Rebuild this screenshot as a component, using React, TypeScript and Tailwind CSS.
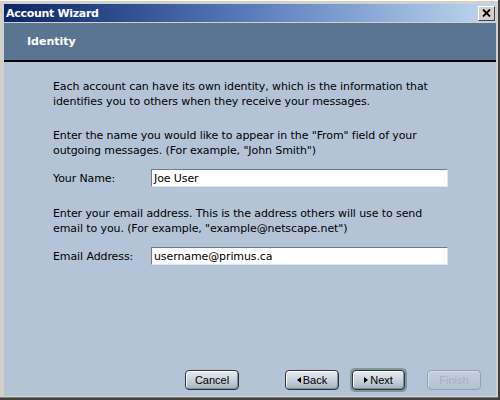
import React from "react";

const font = { fontFamily: '"DejaVu Sans", Verdana, sans-serif' };

function Btn({ children, disabled }: { children: React.ReactNode; disabled?: boolean }) {
  return (
    <div className="w-[54px]">
      <div
        className={
          "flex items-center justify-center h-[20px] rounded-[4px] border text-[11px] leading-none " +
          (disabled
            ? "border-[#8fa2b6] text-[#a3b3c4] bg-gradient-to-b from-[#c4d0dc] to-[#b4c2d0] shadow-[inset_1px_1px_0_#d6dee6]"
            : "border-[#303438] text-black bg-gradient-to-b from-[#e8edf2] via-[#c9d3dc] to-[#a4b2bf] shadow-[inset_1px_1px_0_#ffffff,inset_-1px_-1px_0_#7e8e9c]")
        }
        style={{ fontFamily: '"Liberation Sans", Arial, sans-serif' }}
      >
        {children}
      </div>
    </div>
  );
}

export default function App() {
  return (
    <div
      className="w-[500px] h-[400px] bg-[#d4d0c8] border-r-2 border-b-2 border-[#404040] flex flex-col"
      style={font}
    >
      <div className="flex flex-col flex-1 pt-[4px] pl-[4px] pr-[2px] pb-[1px] border-b border-[#808080] border-t border-t-white">
        {/* Title bar */}
        <div className="h-[18px] -mt-[1px] flex items-center justify-between bg-gradient-to-r from-[#0b2468] via-[#5a7cbc] to-[#c0d8ee] pl-[2px] pr-[1px]">
          <span className="text-white font-bold text-[11px] leading-none tracking-[-0.3px]">
            Account Wizard
          </span>
          <div className="w-[17px] h-[15px] bg-[#d4d0c8] border border-t-white border-l-white border-r-[#404040] border-b-[#404040] flex items-center justify-center">
            <svg width="9" height="8" viewBox="0 0 9 8">
              <path d="M1 0.5 L8 7.5 M8 0.5 L1 7.5" stroke="black" strokeWidth="1.8" />
            </svg>
          </div>
        </div>
        <div className="h-[1px] bg-[#d4d0c8]" />
        {/* Header */}
        <div className="h-[39px] bg-[#5a7592] border-b-2 border-black flex items-center pl-[23px]">
          <span className="text-white font-bold text-[11px] leading-none">Identity</span>
        </div>
        {/* Content */}
        <div className="flex-1 bg-[#b4c4d7] flex flex-col pl-[49px] pt-[17px] text-[11px] leading-[15px] tracking-[-0.1px] text-black">
          <p className="mb-[19px] w-[398px]">
            Each account can have its own identity, which is the information that identifies
            you to others when they receive your messages.
          </p>
          <p className="mb-[11px] w-[398px]">
            Enter the name you would like to appear in the "From" field of your outgoing
            messages. (For example, "John Smith")
          </p>
          <div className="flex items-center mb-[19px]">
            <span className="w-[98px]">Your Name:</span>
            <div className="w-[297px] h-[18px] bg-white border border-t-[#6f7c8a] border-l-[#6f7c8a] border-r-[#dde5ee] border-b-[#dde5ee] flex items-center pl-[2px]">
              Joe User
            </div>
          </div>
          <p className="mb-[11px] w-[398px]">
            Enter your email address. This is the address others will use to send email to
            you. (For example, "example@netscape.net")
          </p>
          <div className="flex items-center">
            <span className="w-[98px]">Email Address:</span>
            <div className="w-[297px] h-[18px] bg-white border border-t-[#6f7c8a] border-l-[#6f7c8a] border-r-[#dde5ee] border-b-[#dde5ee] flex items-center pl-[2px]">
              username@primus.ca
            </div>
          </div>
          <div className="flex-1" />
          <div className="flex items-center pb-[6px] pr-[15px] justify-end tracking-normal">
            <Btn>Cancel</Btn>
            <div className="w-[46px]" />
            <Btn>
              <span className="w-0 h-0 border-y-[3.5px] border-y-transparent border-r-[4px] border-r-black mr-[2px]" />
              Back
            </Btn>
            <div className="w-[13px]" />
            <div className="w-[53px]">
              <div className="rounded-[5px] bg-[#7f9797] p-[2px] -m-[2px]">
                <div
                  className="flex items-center justify-center h-[20px] rounded-[4px] border border-[#303438] text-[11px] leading-none text-black bg-gradient-to-b from-[#e8edf2] via-[#c9d3dc] to-[#a4b2bf] shadow-[inset_1px_1px_0_#ffffff,inset_-1px_-1px_0_#7e8e9c]"
                  style={{ fontFamily: '"Liberation Sans", Arial, sans-serif' }}
                >
                  <span className="w-0 h-0 border-y-[3.5px] border-y-transparent border-l-[4px] border-l-black mr-[2px]" />
                  Next
                </div>
              </div>
            </div>
            <div className="w-[22px]" />
            <Btn disabled>Finish</Btn>
          </div>
        </div>
      </div>
    </div>
  );
}
